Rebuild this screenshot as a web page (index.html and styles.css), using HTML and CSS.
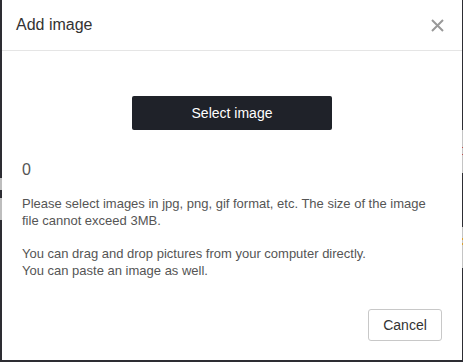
FILE: index.html
```html
<!DOCTYPE html>
<html lang="en">
<head>
    <meta charset="UTF-8">
    <meta name="viewport" content="width=device-width, initial-scale=1.0">
    <title>Add image</title>
    <link rel="stylesheet" href="styles.css">
</head>
<body>
    <div class="dialog">
        <div class="dialog-header">
            <h2>Add image</h2>
            <button class="close-btn" type="button" aria-label="Close">
                <svg width="13" height="13" viewBox="0 0 13 13">
                    <path d="M1 1 L12 12 M12 1 L1 12" stroke="#999" stroke-width="2" fill="none"/>
                </svg>
            </button>
        </div>

        <div class="dialog-body">
            <button class="select-btn" type="button">Select image</button>
            <div class="count">0</div>
            <p>Please select images in jpg, png, gif format, etc. The size of the image file cannot exceed 3MB.</p>
            <p>You can drag and drop pictures from your computer directly.<br>
            You can paste an image as well.</p>
        </div>

        <div class="dialog-footer">
            <button class="cancel-btn" type="button">Cancel</button>
        </div>
    </div>
</body>
</html>
```

FILE: styles.css
```css
* {
    margin: 0;
    padding: 0;
    box-sizing: border-box;
}

body {
    font-family: 'Liberation Sans', Arial, sans-serif;
    min-height: 100vh;
    background-color: #2d2d33;
    background-image:
        linear-gradient(to bottom,
            transparent 0 130px, #c4c4c4 130px 147px, #c0504d 147px 148px,
            #c4c4c4 148px 154px, #c0504d 154px 155px, #c4c4c4 155px 173px,
            transparent 173px 227px, #c4c4c4 227px 238px, #d9a030 238px 240px,
            #c4c4c4 240px 243px, #d9a030 243px 245px, #c4c4c4 245px 268px,
            transparent 268px),
        linear-gradient(to bottom,
            transparent 0 178px, #bdbdbd 178px 190px,
            transparent 190px 198px, #bdbdbd 198px 220px, transparent 220px);
    background-size: 1px 100%, 2px 100%;
    background-position: right top, left top;
    background-repeat: no-repeat;
}

.dialog {
    width: 460px;
    height: 360px;
    margin-left: 2px;
    background: #fff;
    display: flex;
    flex-direction: column;
}

.dialog-header {
    height: 51px;
    border-bottom: 1px solid #e5e5e5;
    display: flex;
    align-items: center;
    justify-content: space-between;
    padding: 0 18px 0 14px;
}

.dialog-header h2 {
    font-size: 16px;
    font-weight: normal;
    color: #333;
    line-height: 50px;
}

.close-btn {
    border: none;
    background: none;
    width: 13px;
    height: 13px;
    display: flex;
    cursor: pointer;
}

.dialog-body {
    padding: 45px 20px 0 20px;
    color: #555;
}

.select-btn {
    display: block;
    width: 200px;
    height: 34px;
    margin: 0 auto;
    background: #1f2229;
    color: #fff;
    border: none;
    border-radius: 2px;
    font-family: inherit;
    font-size: 14px;
    cursor: pointer;
}

.count {
    margin-top: 28px;
    font-size: 16px;
    line-height: 24px;
}

.dialog-body p {
    font-size: 13px;
    line-height: 17px;
    margin-top: 16px;
}

.dialog-body .count + p {
    margin-top: 13px;
}

.dialog-footer {
    margin-top: auto;
    padding: 0 20px 19px;
    display: flex;
    justify-content: flex-end;
}

.cancel-btn {
    width: 74px;
    height: 32px;
    background: #fff;
    border: 1px solid #c8c8c8;
    border-radius: 3px;
    font-family: inherit;
    font-size: 14px;
    color: #333;
    cursor: pointer;
}
```
